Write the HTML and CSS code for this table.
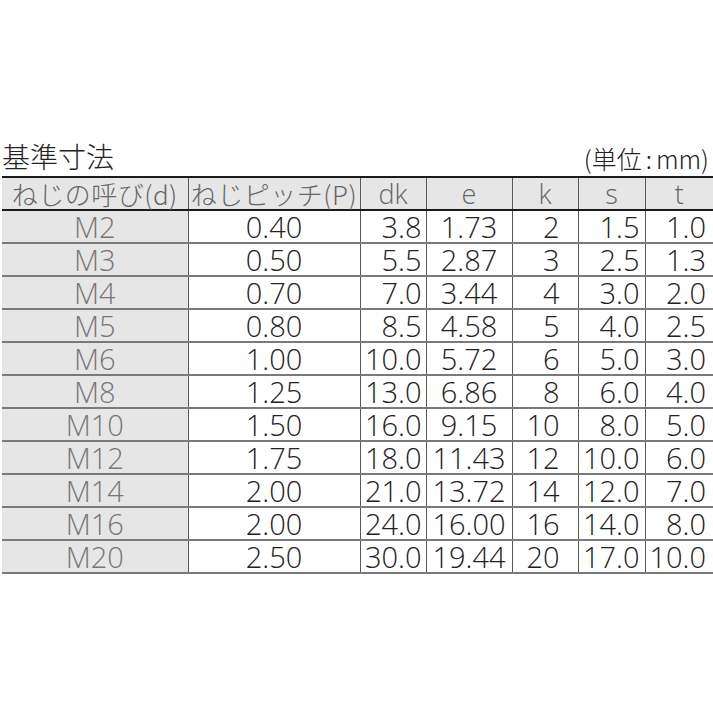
FILE: index.html
```html
<!DOCTYPE html>
<html lang="ja">
<head>
<meta charset="utf-8">
<link rel="stylesheet" href="styles.css">
</head>
<body>
<div class="page">
  <div class="caption">
    <span class="title">基準寸法</span>
    <span class="unit">(単位<span class="colon">:</span>mm)</span>
  </div>
  <table class="spec">
    <colgroup>
      <col class="c1"><col class="c2"><col class="c3"><col class="c4"><col class="c5"><col class="c6"><col class="c7">
    </colgroup>
    <thead>
      <tr><th class="jp">ねじの呼び(d)</th><th class="jp">ねじピッチ(P)</th><th>dk</th><th>e</th><th>k</th><th>s</th><th>t</th></tr>
    </thead>
    <tbody>
      <tr><td class="name">M2</td><td class="p">0.40</td><td class="dk">3.8</td><td class="e">1.73</td><td class="k">2</td><td class="s">1.5</td><td class="t">1.0</td></tr>
      <tr><td class="name">M3</td><td class="p">0.50</td><td class="dk">5.5</td><td class="e">2.87</td><td class="k">3</td><td class="s">2.5</td><td class="t">1.3</td></tr>
      <tr><td class="name">M4</td><td class="p">0.70</td><td class="dk">7.0</td><td class="e">3.44</td><td class="k">4</td><td class="s">3.0</td><td class="t">2.0</td></tr>
      <tr><td class="name">M5</td><td class="p">0.80</td><td class="dk">8.5</td><td class="e">4.58</td><td class="k">5</td><td class="s">4.0</td><td class="t">2.5</td></tr>
      <tr><td class="name">M6</td><td class="p">1.00</td><td class="dk">10.0</td><td class="e">5.72</td><td class="k">6</td><td class="s">5.0</td><td class="t">3.0</td></tr>
      <tr><td class="name">M8</td><td class="p">1.25</td><td class="dk">13.0</td><td class="e">6.86</td><td class="k">8</td><td class="s">6.0</td><td class="t">4.0</td></tr>
      <tr><td class="name">M10</td><td class="p">1.50</td><td class="dk">16.0</td><td class="e">9.15</td><td class="k">10</td><td class="s">8.0</td><td class="t">5.0</td></tr>
      <tr><td class="name">M12</td><td class="p">1.75</td><td class="dk">18.0</td><td class="e">11.43</td><td class="k">12</td><td class="s">10.0</td><td class="t">6.0</td></tr>
      <tr><td class="name">M14</td><td class="p">2.00</td><td class="dk">21.0</td><td class="e">13.72</td><td class="k">14</td><td class="s">12.0</td><td class="t">7.0</td></tr>
      <tr><td class="name">M16</td><td class="p">2.00</td><td class="dk">24.0</td><td class="e">16.00</td><td class="k">16</td><td class="s">14.0</td><td class="t">8.0</td></tr>
      <tr><td class="name">M20</td><td class="p">2.50</td><td class="dk">30.0</td><td class="e">19.44</td><td class="k">20</td><td class="s">17.0</td><td class="t">10.0</td></tr>
    </tbody>
  </table>
</div>
</body>
</html>
```
FILE: styles.css
```css
html, body {
  margin: 0;
  padding: 0;
  background: #ffffff;
}
body {
  font-family: "Open Sans", "Noto Sans CJK JP", sans-serif;
  font-weight: 300;
  color: #222;
}
.page {
  padding: 141px 0 0 2px;
  width: 711px;
}
.caption {
  display: flex;
  justify-content: space-between;
  align-items: flex-end;
  height: 35px;
  line-height: 1;
}
.title {
  font-family: "Noto Sans CJK JP", sans-serif;
  font-size: 28px;
  color: #222;
  padding-bottom: 6px;
}
.unit {
  font-family: "Noto Sans CJK JP", sans-serif;
  font-size: 25px;
  color: #222;
  padding-right: 4px;
  padding-bottom: 5px;
}
.unit .colon {
  padding: 0 4px;
}
.spec {
  border-collapse: collapse;
  table-layout: fixed;
  width: 711px;
}
.c1 { width: 186px; }
.c2 { width: 172px; }
.c3 { width: 66px; }
.c4 { width: 86px; }
.c5 { width: 66px; }
.c6 { width: 67px; }
.c7 { width: 68px; }
.spec th, .spec td {
  padding: 0;
  height: 31px;
  line-height: 1;
  vertical-align: middle;
  white-space: nowrap;
  border-left: 1px solid #5a5a5a;
  font-weight: 300;
}
.spec th:first-child, .spec td:first-child {
  border-left: none;
}
.spec thead tr {
  border-top: 2px solid #1a1a1a;
  border-bottom: 2px solid #1a1a1a;
}
.spec th {
  background: #e6e6e6;
  color: #666;
  font-size: 27px;
  text-align: center;
}
.spec th.jp {
  font-family: "Noto Sans CJK JP", sans-serif;
  font-size: 26px;
  letter-spacing: 0.5px;
}
.spec tbody tr {
  border-bottom: 2px solid #7a7a7a;
}
.spec td {
  font-size: 29px;
  color: #222;
}
.spec td.name {
  background: #e6e6e6;
  color: #777;
  text-align: center;
}
.spec td.p { text-align: center; }
.spec td.dk { text-align: right; padding-right: 4px; }
.spec td.e { text-align: center; }
.spec td.k { text-align: right; padding-right: 18px; }
.spec td.s { text-align: right; padding-right: 5px; }
.spec td.t { text-align: right; padding-right: 7px; }
```
